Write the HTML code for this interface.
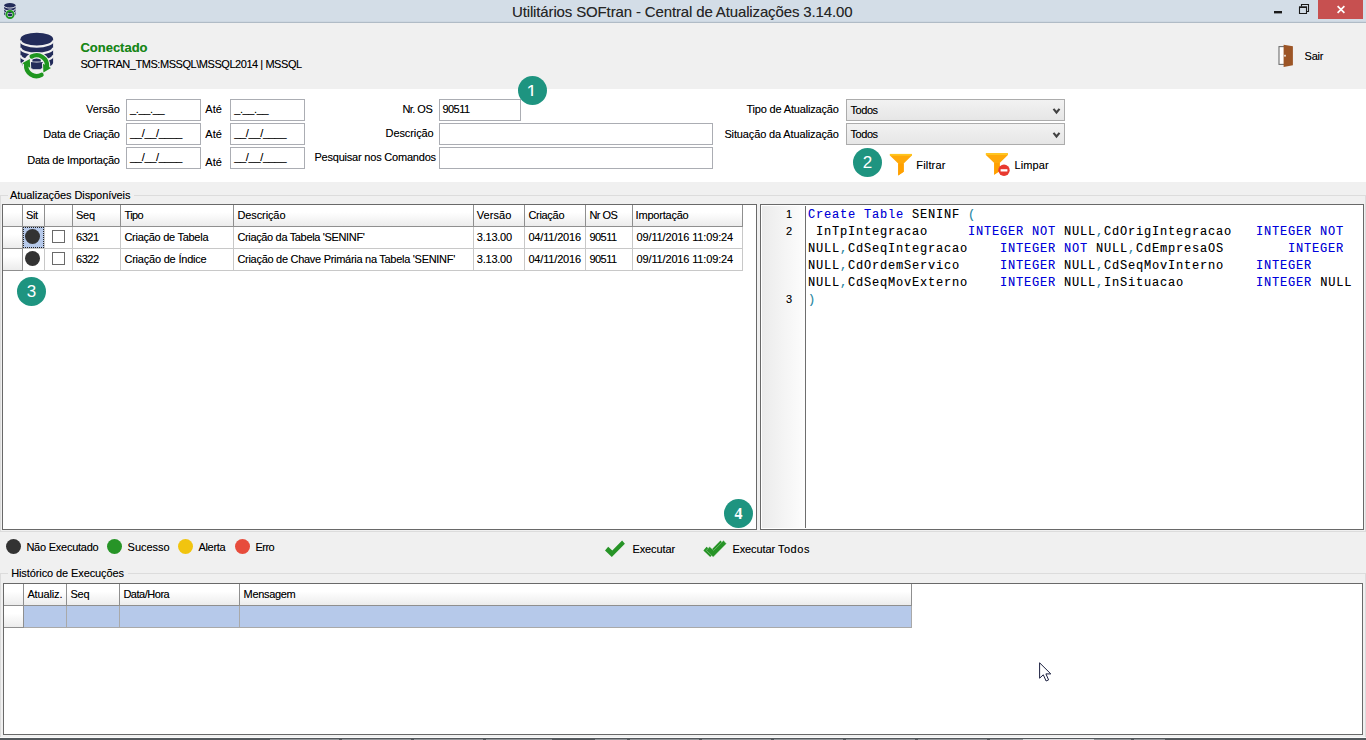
<!DOCTYPE html>
<html lang="pt-BR">
<head>
<meta charset="utf-8">
<title>Utilitários SOFtran - Central de Atualizações 3.14.00</title>
<style>
*{box-sizing:border-box;margin:0;padding:0}
html,body{width:1366px;height:740px;overflow:hidden;background:#f0f0f0}
body{position:relative;font-family:"Liberation Sans",sans-serif;font-size:11px;color:#000;line-height:13px}
.a,.t,.inp,.sel,.badge,.hd,.cell,.dot,.chk,svg{position:absolute}
.t{white-space:pre;line-height:13px;height:13px;text-shadow:0 0 0 rgba(0,0,0,.35)}
svg{overflow:visible}
#titlebar{left:0;top:0;width:1366px;height:22px;background:#d3dde7}
#titleline{left:0;top:21px;width:1366px;height:2px;background:linear-gradient(#cdd7e1 50%,#b0bbc6 50%)}
#close{left:1318px;top:0;width:45px;height:19px;background:#c75050}
#filter{left:0;top:89px;width:1366px;height:93px;background:#fff}
.inp{background:#fff;border:1px solid #abadb3;height:22px}
.sel{background:linear-gradient(#f2f2f2,#e6e6e6);border:1px solid #acacac;height:22px;width:219px;left:846px}
.badge{width:29.4px;height:29.4px;border-radius:50%;background:#1e9480;color:#fff;font:normal 17px/30px "Liberation Sans",sans-serif;text-align:center}
.badge span{position:absolute;left:-1px;top:0;width:29.4px;height:20.3px;overflow:hidden;font-size:18.6px;line-height:31px}
.gl{background:#dcdcdc}
.gw{background:#fbfbfb}
.grid{background:#fff;border:1px solid #696969}
.hd{background:linear-gradient(#ffffff 35%,#ececec);border-right:1px solid #8f8f8f;border-bottom:1px solid #8f8f8f;height:22px;top:0}
.cell{border-right:1px solid #c8c8c8;border-bottom:1px solid #c8c8c8;height:22px;background:#fff}
.cell.ind{background:linear-gradient(#ffffff 35%,#ececec);border-right:1px solid #8f8f8f;border-bottom:1px solid #8f8f8f}
.dot{border-radius:50%;width:15px;height:15px}
.chk{width:13px;height:13px;border:1px solid #6a6a6a;background:#fff}
.mono{font:normal 12px/17px "Liberation Mono",monospace;letter-spacing:0.799px;height:17px;left:808px;color:#000}
.kw{color:#0000e1}
.sy{color:#2a8fae}
</style>
</head>
<body>
<!-- window chrome -->
<div id="titlebar" class="a"></div>
<div id="titleline" class="a"></div>
<div id="close" class="a"></div>
<svg style="left:1274px;top:3px" width="72" height="14" viewBox="0 0 72 14">
  <rect x="0" y="8" width="8" height="2.4" fill="#1a1a1a"/>
  <path d="M27.5 3.5V1.5H34.5V8.5H32.5" fill="none" stroke="#1a1a1a" stroke-width="1.1"/>
  <path d="M25.5 4.2H32.5V10.5H25.5Z" fill="none" stroke="#1a1a1a" stroke-width="1.1"/>
  <rect x="25" y="3.4" width="8" height="1.6" fill="#1a1a1a"/>
  <path d="M63.6 3.2L70.4 9.8M70.4 3.2L63.6 9.8" stroke="#fff" stroke-width="1.7" fill="none"/>
</svg>
<!-- small app icon -->
<svg style="left:4px;top:3px" width="12" height="16.4" viewBox="0 0 34 47">
  <path d="M0.3 6.5V32.5A16.3 6.2 0 0 0 32.9 32.5V6.5Z" fill="#232c5a"/>
  <ellipse cx="16.6" cy="6.5" rx="16.3" ry="6.2" fill="#232c5a"/>
  <path d="M0.3 8.3A16.3 6.2 0 0 0 32.9 8.3M0.3 16.6A16.3 6.2 0 0 0 32.9 16.6M0.3 24.4A16.3 6.2 0 0 0 32.9 24.4" fill="none" stroke="#eef0f4" stroke-width="2.6"/>
  <circle cx="17" cy="33" r="10.2" fill="none" stroke="#d3dde7" stroke-width="8"/>
  <circle cx="17" cy="33" r="10.2" fill="none" stroke="#1f9a1f" stroke-width="5.5"/>
  <rect x="12" y="26" width="10" height="3" fill="#232c5a"/><rect x="12" y="31" width="10" height="5" fill="#232c5a"/>
</svg>
<!-- top panel -->
<svg style="left:20px;top:33px" width="34" height="47" viewBox="0 0 34 47">
  <path d="M0.5 5.9V29.6A16.3 6.2 0 0 0 33.1 29.6V5.9Z" fill="#232c5a"/>
  <ellipse cx="16.8" cy="5.9" rx="16.3" ry="6.2" fill="#232c5a"/>
  <path d="M0.5 7.4A16.3 6.2 0 0 0 33.1 7.4M0.5 14.7A16.3 6.2 0 0 0 33.1 14.7M0.5 22.2A16.3 6.2 0 0 0 33.1 22.2" fill="none" stroke="#f0f0f0" stroke-width="2.2"/>
  <path d="M0 29.6L3 34" stroke="#f0f0f0" stroke-width="1.2"/>
  <circle cx="16.6" cy="32.7" r="10.4" fill="none" stroke="#f0f0f0" stroke-width="6.6"/>
  <path d="M23 30.7L31 35.1L23.4 39.5ZM10.2 34.7L2.2 30.3L9.8 25.9Z" fill="#f0f0f0" stroke="#f0f0f0" stroke-width="2" stroke-linejoin="round"/>
  <rect x="12.4" y="26.6" width="8.4" height="2" fill="#232c5a"/><rect x="12.4" y="30.6" width="8.4" height="5.6" fill="#232c5a"/>
  <path d="M11.7 23.5A10.4 10.4 0 0 1 27 33.6" fill="none" stroke="#1f961f" stroke-width="4.4" stroke-linecap="round"/>
  <path d="M21.5 41.9A10.4 10.4 0 0 1 6.2 31.8" fill="none" stroke="#1f961f" stroke-width="4.4" stroke-linecap="round"/>
  <path d="M23 30.7L31 35.1L23.4 39.5ZM10.2 34.7L2.2 30.3L9.8 25.9Z" fill="#1f961f"/>
</svg>
<svg style="left:1278px;top:44px" width="16" height="24" viewBox="0 0 16 24">
  <rect x="1" y="2.6" width="6" height="17.8" fill="#fff" stroke="#6e6e6e" stroke-width="1.1"/>
  <path d="M5.6 0.7L14.9 2.2V21.2L5.6 22.9Z" fill="#9c5526"/>
  <rect x="6.2" y="10.8" width="1.6" height="1.8" fill="#f4f4f4"/>
</svg>
<!-- filter panel -->
<div id="filter" class="a"></div>
<div class="inp" style="left:126px;top:99px;width:75px"></div>
<div class="inp" style="left:126px;top:123px;width:75px"></div>
<div class="inp" style="left:126px;top:147px;width:75px"></div>
<div class="inp" style="left:230px;top:99px;width:75px"></div>
<div class="inp" style="left:230px;top:123px;width:75px"></div>
<div class="inp" style="left:230px;top:147px;width:75px"></div>
<div class="inp" style="left:439px;top:99px;width:82px"></div>
<div class="inp" style="left:439px;top:123px;width:274px"></div>
<div class="inp" style="left:439px;top:147px;width:274px"></div>
<div class="sel" style="top:99px"></div>
<div class="sel" style="top:123px"></div>
<svg style="left:1053px;top:108px" width="8" height="30" viewBox="0 0 8 30">
  <path d="M0.5 0.9L3.5 4.5L6.5 0.9" fill="none" stroke="#424242" stroke-width="2.1"/>
  <path d="M0.5 24.9L3.5 28.5L6.5 24.9" fill="none" stroke="#424242" stroke-width="2.1"/>
</svg>
<!-- funnels -->
<svg style="left:889px;top:153px" width="24" height="23" viewBox="0 0 24 23">
  <path d="M0.9 0.9H22.9V2.6L14.7 10.6V18.8L9.2 22.4V10.6L0.9 2.6Z" fill="#ffa90a"/>
  <path d="M9.2 10.6H14.7V18.8L9.2 22.4Z" fill="#ffa000"/>
  <rect x="0.9" y="0.9" width="22" height="1.8" fill="#ffc61e"/>
</svg>
<svg style="left:985px;top:152px" width="26" height="26" viewBox="0 0 26 26">
  <path d="M0.9 1.2H22.9V2.9L14.7 10.9V19.1L9.2 22.7V10.9L0.9 2.9Z" fill="#ffa90a"/>
  <path d="M9.2 10.9H14.7V19.1L9.2 22.7Z" fill="#ffa000"/>
  <rect x="0.9" y="1.2" width="22" height="1.8" fill="#ffc61e"/>
  <circle cx="19" cy="18.3" r="5.7" fill="#e8392f"/>
  <rect x="15.6" y="17.2" width="6.8" height="2.3" fill="#fff"/>
</svg>
<!-- badges -->
<div class="badge" style="left:518px;top:75.7px"><span>1</span></div>
<div class="badge" style="left:852.9px;top:147.7px">2</div>
<div class="a gl" style="left:0;top:195px;width:8px;height:1px"></div>
<div class="a gl" style="left:134px;top:195px;width:1232px;height:1px"></div>
<div class="a gl" style="left:0;top:195px;width:1px;height:337px"></div>
<div class="a gl" style="left:0;top:531px;width:1366px;height:1px"></div>
<div class="a gl" style="left:1365px;top:195px;width:1px;height:337px"></div>
<div class="a gl" style="left:0;top:573px;width:8px;height:1px"></div>
<div class="a gl" style="left:128px;top:573px;width:1238px;height:1px"></div>
<div class="a gl" style="left:0;top:573px;width:1px;height:165px"></div>
<div class="a gl" style="left:1365px;top:573px;width:1px;height:165px"></div>
<!-- grid 1 -->
<div class="a grid" style="left:2px;top:204px;width:755px;height:326px">
  <div class="hd" style="left:0;width:20px"></div>
  <div class="hd" style="left:20px;width:22px"></div>
  <div class="hd" style="left:42px;width:28px"></div>
  <div class="hd" style="left:70px;width:48px"></div>
  <div class="hd" style="left:118px;width:113px"></div>
  <div class="hd" style="left:231px;width:240px"></div>
  <div class="hd" style="left:471px;width:51px"></div>
  <div class="hd" style="left:522px;width:61px"></div>
  <div class="hd" style="left:583px;width:47px"></div>
  <div class="hd" style="left:630px;width:110px"></div>
  <div class="cell ind" style="left:0;top:22px;width:20px"></div>
  <div class="cell ind" style="left:0;top:44px;width:20px"></div>
  <div class="cell" style="left:20px;top:22px;width:22px;background:#b6c9ea"></div>
  <div class="a" style="left:20px;top:22px;width:21px;height:21px;border:1px dotted #222"></div>
  <div class="cell" style="left:20px;top:44px;width:22px"></div>
  <div class="cell" style="left:42px;top:22px;width:28px"></div>
  <div class="cell" style="left:42px;top:44px;width:28px"></div>
  <div class="cell" style="left:70px;top:22px;width:48px"></div>
  <div class="cell" style="left:70px;top:44px;width:48px"></div>
  <div class="cell" style="left:118px;top:22px;width:113px"></div>
  <div class="cell" style="left:118px;top:44px;width:113px"></div>
  <div class="cell" style="left:231px;top:22px;width:240px"></div>
  <div class="cell" style="left:231px;top:44px;width:240px"></div>
  <div class="cell" style="left:471px;top:22px;width:51px"></div>
  <div class="cell" style="left:471px;top:44px;width:51px"></div>
  <div class="cell" style="left:522px;top:22px;width:61px"></div>
  <div class="cell" style="left:522px;top:44px;width:61px"></div>
  <div class="cell" style="left:583px;top:22px;width:47px"></div>
  <div class="cell" style="left:583px;top:44px;width:47px"></div>
  <div class="cell" style="left:630px;top:22px;width:110px"></div>
  <div class="cell" style="left:630px;top:44px;width:110px"></div>
  <div class="dot" style="left:22.1px;top:24px;background:#333"></div>
  <div class="dot" style="left:22.1px;top:46px;background:#333"></div>
  <div class="chk" style="left:49px;top:25px"></div>
  <div class="chk" style="left:49px;top:47px"></div>
</div>
<div class="badge" style="left:16.7px;top:276.9px">3</div>
<div class="badge" style="left:723.9px;top:498.7px;font-family:'Liberation Serif',serif;font-size:16px;font-weight:bold">4</div>
<!-- code editor -->
<div class="a grid" style="left:760px;top:204px;width:604px;height:326px">
  <div class="a" style="left:1px;top:1px;width:44px;height:322px;background:linear-gradient(90deg,#ebebeb,#fdfdfd);border-right:1px solid #6e6e6e"></div>
</div>
<div class="t mono" style="top:207px"><span class="kw">Create Table</span> SENINF <span class="sy">(</span></div>
<div class="t mono" style="top:224px"> InTpIntegracao     <span class="kw">INTEGER NOT</span> NULL<span class="sy">,</span>CdOrigIntegracao   <span class="kw">INTEGER NOT</span></div>
<div class="t mono" style="top:241px">NULL<span class="sy">,</span>CdSeqIntegracao    <span class="kw">INTEGER NOT</span> NULL<span class="sy">,</span>CdEmpresaOS        <span class="kw">INTEGER</span></div>
<div class="t mono" style="top:258px">NULL<span class="sy">,</span>CdOrdemServico     <span class="kw">INTEGER</span> NULL<span class="sy">,</span>CdSeqMovInterno    <span class="kw">INTEGER</span></div>
<div class="t mono" style="top:275px">NULL<span class="sy">,</span>CdSeqMovExterno    <span class="kw">INTEGER</span> NULL<span class="sy">,</span>InSituacao         <span class="kw">INTEGER</span> NULL</div>
<div class="t mono" style="top:292px"><span class="sy">)</span></div>
<!-- legend -->
<div class="dot" style="left:6.1px;top:539px;background:#333"></div>
<div class="dot" style="left:107.2px;top:539px;background:#279427"></div>
<div class="dot" style="left:178.2px;top:539px;background:#f1c40f"></div>
<div class="dot" style="left:235.3px;top:539px;background:#e74c3c"></div>
<svg style="left:604px;top:540px" width="22" height="18" viewBox="0 0 22 18">
  <path d="M1 10.4L4.2 6.8L8.3 10.4L18.1 0.6L20.9 3.7L7.8 17Z" fill="#279427"/>
</svg>
<svg style="left:703px;top:540px" width="25" height="18" viewBox="0 0 25 18">
  <path d="M0.4 10.4L3.6 6.8L7.7 10.4L17.5 0.6L20.3 3.7L7.2 17Z" fill="#279427"/>
  <path d="M3.4 10.4L6.6 6.8L10.7 10.4L20.5 0.6L23.3 3.7L10.2 17Z" fill="#279427" stroke="#9fd09f" stroke-width="0.5"/>
</svg>
<!-- grid 2 -->
<div class="a grid" style="left:3px;top:583px;width:1360px;height:152px">
  <div class="hd" style="left:0;width:20px"></div>
  <div class="hd" style="left:20px;width:43px"></div>
  <div class="hd" style="left:63px;width:53px"></div>
  <div class="hd" style="left:116px;width:120px"></div>
  <div class="hd" style="left:236px;width:672px"></div>
  <div class="cell ind" style="left:0;top:22px;width:20px"></div>
  <div class="cell" style="left:20px;top:22px;width:43px;background:#b6c9ea;border-color:#a9a9a9"></div>
  <div class="cell" style="left:63px;top:22px;width:53px;background:#b6c9ea;border-color:#a9a9a9"></div>
  <div class="cell" style="left:116px;top:22px;width:120px;background:#b6c9ea;border-color:#a9a9a9"></div>
  <div class="cell" style="left:236px;top:22px;width:672px;background:#b6c9ea;border-color:#a9a9a9"></div>
</div>
<!-- bottom edge -->
<div class="a" style="left:0;top:737px;width:1366px;height:1px;background:#fafafa"></div>
<div class="a" style="left:0;top:738px;width:1366px;height:2px;background:#53585c"></div>
<div class="a" style="left:270px;top:739px;width:895px;height:1px;background:repeating-linear-gradient(90deg,#92969a 0,#92969a 69px,#53585c 69px,#53585c 72px)"></div>
<div class="a" style="left:552px;top:739px;width:43px;height:1px;background:#53585c"></div>
<div class="a" style="left:1023px;top:739px;width:71px;height:1px;background:#d8dadc"></div>
<!-- cursor -->
<svg style="left:1039px;top:662px" width="13" height="20" viewBox="0 0 13 20">
  <path d="M0.6 0.8V16.2L4.3 12.8L7.1 19L9.6 17.9L6.9 11.9H11.8Z" fill="#fff" stroke="#1c2140" stroke-width="1"/>
</svg>
<div class="t" style="left:512.00px;top:3px;letter-spacing:-0.138px;font:normal 15px/17px 'Liberation Sans',sans-serif;height:17px;color:#262626;">Utilitários SOFtran - Central de Atualizações 3.14.00</div>
<div class="t" style="left:80.40px;top:40px;font:bold 13px/15px 'Liberation Sans',sans-serif;height:15px;color:#148a14;">Conectado</div>
<div class="t" style="left:80.40px;top:58px;letter-spacing:-0.449px;">SOFTRAN_TMS:MSSQL\MSSQL2014 | MSSQL</div>
<div class="t" style="left:1304.50px;top:50px;letter-spacing:-0.199px;">Sair</div>
<div class="t" style="left:86.00px;top:103px;letter-spacing:-0.066px;">Versão</div>
<div class="t" style="left:43.30px;top:128px;letter-spacing:-0.205px;">Data de Criação</div>
<div class="t" style="left:27.20px;top:154px;letter-spacing:-0.229px;">Data de Importação</div>
<div class="t" style="left:205.20px;top:103px;letter-spacing:0.103px;">Até</div>
<div class="t" style="left:205.20px;top:128px;letter-spacing:0.103px;">Até</div>
<div class="t" style="left:205.20px;top:156px;letter-spacing:0.103px;">Até</div>
<div class="t" style="left:130.00px;top:103px;letter-spacing:-0.347px;">_.__.__</div>
<div class="t" style="left:130.00px;top:127px;letter-spacing:-0.304px;">__/__/____</div>
<div class="t" style="left:130.00px;top:151px;letter-spacing:-0.304px;">__/__/____</div>
<div class="t" style="left:234.20px;top:103px;letter-spacing:-0.381px;">_.__.__</div>
<div class="t" style="left:234.20px;top:127px;letter-spacing:-0.304px;">__/__/____</div>
<div class="t" style="left:234.20px;top:151px;letter-spacing:-0.304px;">__/__/____</div>
<div class="t" style="left:402.40px;top:103px;letter-spacing:-0.534px;">Nr. OS</div>
<div class="t" style="left:385.60px;top:127px;letter-spacing:-0.098px;">Descrição</div>
<div class="t" style="left:314.40px;top:151px;letter-spacing:-0.203px;">Pesquisar nos Comandos</div>
<div class="t" style="left:442.40px;top:103px;letter-spacing:-0.514px;">90511</div>
<div class="t" style="left:746.40px;top:103px;letter-spacing:-0.172px;">Tipo de Atualização</div>
<div class="t" style="left:724.40px;top:128px;letter-spacing:-0.132px;">Situação da Atualização</div>
<div class="t" style="left:850.40px;top:104px;letter-spacing:-0.413px;">Todos</div>
<div class="t" style="left:850.40px;top:128px;letter-spacing:-0.413px;">Todos</div>
<div class="t" style="left:916.30px;top:159px;letter-spacing:0.159px;">Filtrar</div>
<div class="t" style="left:1014.40px;top:159px;letter-spacing:0.128px;">Limpar</div>
<div class="t" style="left:10.00px;top:189px;letter-spacing:-0.078px;">Atualizações Disponíveis</div>
<div class="t" style="left:26.00px;top:209px;letter-spacing:-0.390px;">Sit</div>
<div class="t" style="left:76.00px;top:209px;letter-spacing:-0.227px;">Seq</div>
<div class="t" style="left:124.40px;top:209px;letter-spacing:-0.558px;">Tipo</div>
<div class="t" style="left:237.40px;top:209px;letter-spacing:-0.098px;">Descrição</div>
<div class="t" style="left:476.80px;top:209px;letter-spacing:0.074px;">Versão</div>
<div class="t" style="left:528.40px;top:209px;letter-spacing:-0.298px;">Criação</div>
<div class="t" style="left:589.40px;top:209px;letter-spacing:-0.505px;">Nr OS</div>
<div class="t" style="left:635.60px;top:209px;letter-spacing:-0.212px;">Importação</div>
<div class="t" style="left:76.00px;top:231px;letter-spacing:-0.451px;">6321</div>
<div class="t" style="left:124.40px;top:231px;letter-spacing:-0.272px;">Criação de Tabela</div>
<div class="t" style="left:237.40px;top:231px;letter-spacing:-0.342px;">Criação da Tabela 'SENINF'</div>
<div class="t" style="left:476.80px;top:231px;letter-spacing:-0.231px;">3.13.00</div>
<div class="t" style="left:528.40px;top:231px;letter-spacing:-0.169px;">04/11/2016</div>
<div class="t" style="left:589.40px;top:231px;letter-spacing:-0.514px;">90511</div>
<div class="t" style="left:636.60px;top:231px;letter-spacing:-0.154px;">09/11/2016 11:09:24</div>
<div class="t" style="left:76.00px;top:253px;letter-spacing:-0.451px;">6322</div>
<div class="t" style="left:124.40px;top:253px;letter-spacing:-0.205px;">Criação de Índice</div>
<div class="t" style="left:237.40px;top:253px;letter-spacing:-0.286px;">Criação de Chave Primária na Tabela 'SENINF'</div>
<div class="t" style="left:476.80px;top:253px;letter-spacing:-0.231px;">3.13.00</div>
<div class="t" style="left:528.40px;top:253px;letter-spacing:-0.169px;">04/11/2016</div>
<div class="t" style="left:589.40px;top:253px;letter-spacing:-0.514px;">90511</div>
<div class="t" style="left:636.60px;top:253px;letter-spacing:-0.154px;">09/11/2016 11:09:24</div>
<div class="t" style="left:26.40px;top:541px;letter-spacing:-0.242px;">Não Executado</div>
<div class="t" style="left:127.60px;top:541px;letter-spacing:-0.012px;">Sucesso</div>
<div class="t" style="left:198.40px;top:541px;letter-spacing:-0.284px;">Alerta</div>
<div class="t" style="left:255.40px;top:541px;letter-spacing:-0.488px;">Erro</div>
<div class="t" style="left:632.40px;top:543px;letter-spacing:-0.078px;">Executar</div>
<div class="t" style="left:732.50px;top:543px;letter-spacing:-0.121px;word-spacing:0px;">Executar<span style="letter-spacing:0.537px;margin-left:-0.44px"> Todos</span></div>
<div class="t" style="left:11.20px;top:567px;letter-spacing:-0.102px;">Histórico de Execuções</div>
<div class="t" style="left:27.40px;top:588px;letter-spacing:-0.145px;">Atualiz.</div>
<div class="t" style="left:70.40px;top:588px;letter-spacing:-0.227px;">Seq</div>
<div class="t" style="left:123.40px;top:588px;letter-spacing:-0.477px;">Data/Hora</div>
<div class="t" style="left:243.60px;top:588px;letter-spacing:-0.322px;">Mensagem</div>
<div class="t" style="left:785.90px;top:208px;color:#000;">1</div>
<div class="t" style="left:785.90px;top:225px;color:#000;">2</div>
<div class="t" style="left:785.90px;top:293px;color:#000;">3</div>
</body>
</html>
